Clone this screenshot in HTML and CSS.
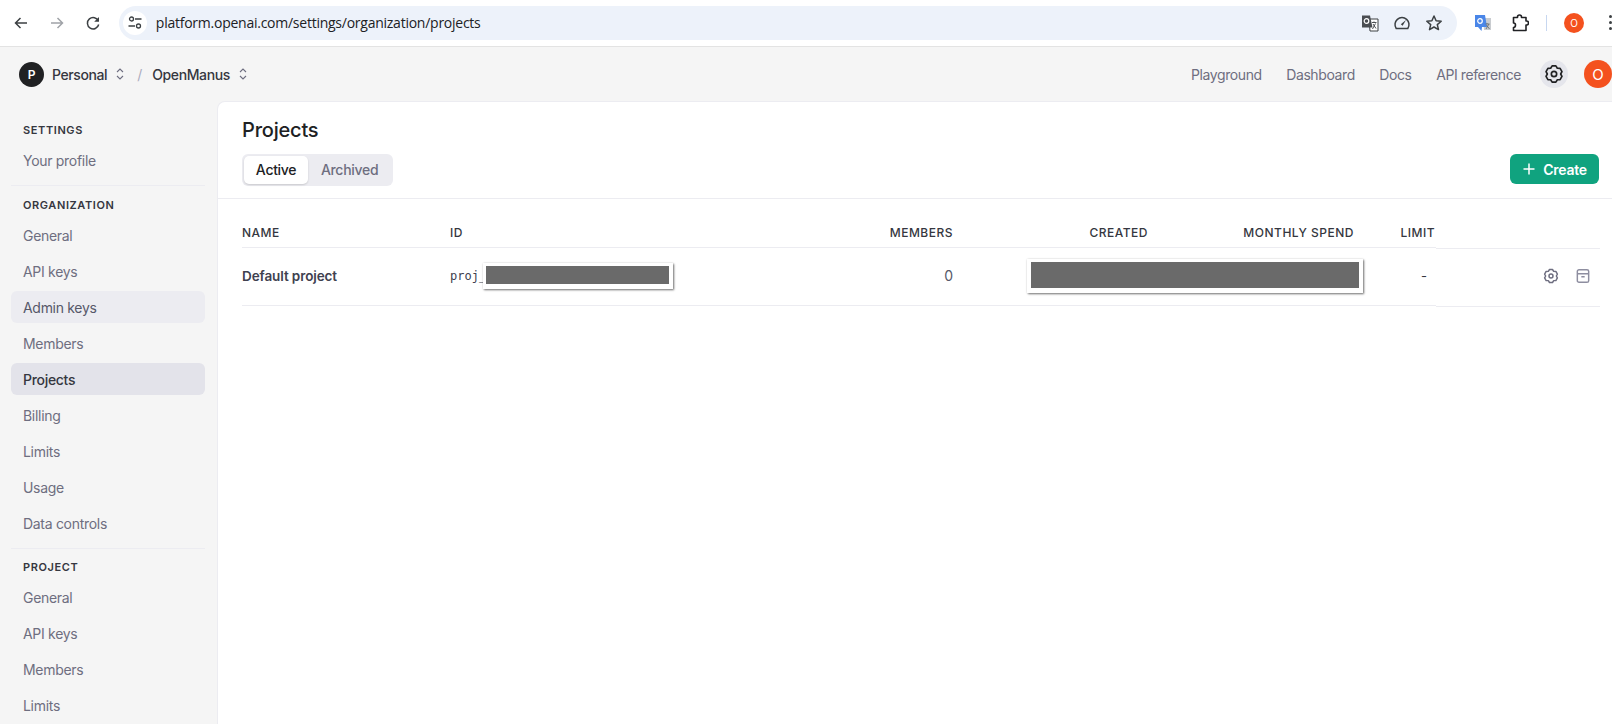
FILE: index.html
```html
<!DOCTYPE html>
<html lang="en">
<head>
<meta charset="utf-8">
<title>Projects - OpenAI Platform</title>
<link rel="stylesheet" href="styles.css">
</head>
<body>
<div class="browser-bar">
  <button class="tool"><svg viewBox="0 0 16 16" class="ico16"><path d="M14 8H2.500M7.500 3l-5 5 5 5" fill="none" stroke="#3c4043" stroke-width="1.500"/></svg></button>
  <button class="tool"><svg viewBox="0 0 16 16" class="ico16"><path d="M2 8h11.500M8.500 3l5 5-5 5" fill="none" stroke="#a0a3a8" stroke-width="1.500"/></svg></button>
  <button class="tool"><svg viewBox="0 0 16 16" class="ico16"><path d="M13.400 6A5.700 5.700 0 1 0 13.700 9.500" fill="none" stroke="#3c4043" stroke-width="1.500"/><path d="M14 2v4.800H9.200z" fill="#3c4043"/></svg></button>
  <div class="omnibox">
    <span class="site-btn"><svg viewBox="0 0 16 16" class="ico16"><g fill="none" stroke="#3c4043" stroke-width="1.300"><circle cx="4.500" cy="4" r="2"/><path d="M8 4h6.500M1.500 11H8"/><circle cx="11.500" cy="11" r="2"/></g></svg></span>
    <span class="url">platform.openai.com/settings/organization/projects</span>
    <span class="omni-icons">
      <svg viewBox="0 0 18 18" class="ico18"><path d="M8 5h9v12H9z" fill="#fff" stroke="#3c4043" stroke-width="1"/><path d="M1 1.500h8l2.500 12H1z" fill="#4a4d51"/><circle cx="5.500" cy="7" r="2.300" fill="none" stroke="#fff" stroke-width="1.200"/><path d="M11 8.500h4.500M13 7.500v1M11.500 15l3-5.500M12 10l3 4.500" stroke="#3c4043" fill="none" stroke-width=".9"/></svg>
      <svg viewBox="0 0 18 18" class="ico18"><path d="M3.200 14.500a7 7 0 1 1 11.600 0z" fill="none" stroke="#3c4043" stroke-width="1.500"/><path d="M7.800 10.300l5.200-4.300-3.400 5.800z" fill="#3c4043"/></svg>
      <svg viewBox="0 0 18 18" class="ico18"><path d="M9 2l2.100 4.700 5.100.5-3.900 3.400 1.200 5L9 13l-4.500 2.600 1.200-5-3.900-3.400 5.100-.5z" fill="none" stroke="#3c4043" stroke-width="1.500" stroke-linejoin="round"/></svg>
    </span>
  </div>
  <div class="ext-icons">
    <svg viewBox="0 0 18 18" class="ico18"><path d="M9 4h8v12H10z" fill="#c9ccd0"/><path d="M1 1h10l2 12H8l-.5 4L4 13H1z" fill="#4a86e8"/><circle cx="6" cy="7" r="2.300" fill="none" stroke="#fff" stroke-width="1.200"/><path d="M11.500 10h4M13 9v1M12 15l3-5M12.500 11l3 4" stroke="#6b6f74" stroke-width=".9" fill="none"/></svg>
    <svg viewBox="0 0 18 18" class="ico18 puzzle"><path d="M6.500 3.500V3a2 2 0 0 1 4 0v.5h4.500V7h.5a2 2 0 0 1 0 4H15v5.500H2.500V13.500c1.500 0 2-1 2-2.500s-.5-2-2-2V3.500z" fill="none" stroke="#202124" stroke-width="1.600" stroke-linejoin="round"/></svg>
    <span class="ext-divider"></span>
    <span class="chrome-avatar">O</span>
    <span class="kebab"><i></i><i></i><i></i></span>
  </div>
</div>

<header class="top-nav">
  <div class="crumbs">
    <span class="org-avatar">P</span>
    <span class="crumb">Personal</span>
    <svg viewBox="0 0 10 14" class="updown"><path d="M2 5l3-3 3 3M2 9l3 3 3-3" fill="none" stroke="#6e6e80" stroke-width="1.100"/></svg>
    <span class="slash">/</span>
    <span class="crumb">OpenManus</span>
    <svg viewBox="0 0 10 14" class="updown"><path d="M2 5l3-3 3 3M2 9l3 3 3-3" fill="none" stroke="#6e6e80" stroke-width="1.100"/></svg>
  </div>
  <nav class="top-links">
    <a>Playground</a>
    <a>Dashboard</a>
    <a>Docs</a>
    <a>API reference</a>
  </nav>
  <span class="gear-btn"><svg viewBox="0 0 24 24" class="ico20"><path d="M14.250 2.260L16 5.070l3.310.11 2.250 3.900L20 12l1.560 2.920-2.250 3.900-3.310.11-1.750 2.810h-4.500L8 18.930l-3.310-.11-2.250-3.900L4 12 2.440 9.080l2.250-3.900L8 5.070l1.750-2.810z" fill="none" stroke="#202123" stroke-width="2" stroke-linejoin="round"/><circle cx="12" cy="12" r="3.200" fill="none" stroke="#202123" stroke-width="2"/></svg></span>
  <span class="user-avatar">O</span>
</header>

<div class="layout">
  <aside class="sidebar">
    <h4 class="side-head first">SETTINGS</h4>
    <a class="side-item">Your profile</a>
    <hr class="side-rule">
    <h4 class="side-head">ORGANIZATION</h4>
    <a class="side-item">General</a>
    <a class="side-item">API keys</a>
    <a class="side-item hover">Admin keys</a>
    <a class="side-item">Members</a>
    <a class="side-item active">Projects</a>
    <a class="side-item">Billing</a>
    <a class="side-item">Limits</a>
    <a class="side-item">Usage</a>
    <a class="side-item">Data controls</a>
    <hr class="side-rule tight">
    <h4 class="side-head">PROJECT</h4>
    <a class="side-item">General</a>
    <a class="side-item">API keys</a>
    <a class="side-item">Members</a>
    <a class="side-item">Limits</a>
  </aside>

  <main class="panel">
    <div class="panel-head">
      <h1 class="title">Projects</h1>
      <div class="head-row">
        <div class="tabs">
          <span class="tab on">Active</span>
          <span class="tab">Archived</span>
        </div>
        <button class="create"><svg viewBox="0 0 14 14" class="plus"><path d="M7 1.500v11M1.500 7h11" stroke="#fff" stroke-width="1.500" fill="none"/></svg>Create</button>
      </div>
    </div>

    <div class="table">
      <div class="tbl-main">
        <div class="tr th">
          <span>NAME</span>
          <span>ID</span>
          <span class="r">MEMBERS</span>
          <span class="r">CREATED</span>
          <span class="r">MONTHLY SPEND</span>
          <span class="r">LIMIT</span>
        </div>
        <div class="tr td">
          <span class="pname">Default project</span>
          <span class="pid">proj_<span class="mask mask-id"><i></i></span></span>
          <span class="r num">0</span>
          <span class="r created-cell"><span class="mask mask-date"><i></i></span></span>
          <span class="r"></span>
          <span class="r dash">-</span>
        </div>
      </div>
      <div class="tbl-actions">
        <div class="act-head"></div>
        <div class="act-cell">
          <svg viewBox="0 0 24 24" class="act"><path d="M14.250 2.260L16 5.070l3.310.11 2.250 3.900L20 12l1.560 2.920-2.250 3.900-3.310.11-1.750 2.810h-4.500L8 18.930l-3.310-.11-2.250-3.900L4 12 2.440 9.080l2.250-3.900L8 5.070l1.750-2.810z" fill="none" stroke="#6e6e80" stroke-width="2.200" stroke-linejoin="round"/><circle cx="12" cy="12" r="3" fill="none" stroke="#6e6e80" stroke-width="2.200"/></svg>
          <svg viewBox="0 0 24 24" class="act"><path d="M6 2.500h12A2.500 2.500 0 0 1 20.500 5v14a2.500 2.500 0 0 1-2.500 2.500H6A2.500 2.500 0 0 1 3.500 19V5A2.500 2.500 0 0 1 6 2.500zM3.500 8.500h17M9.500 13h5" fill="none" stroke="#8e8ea0" stroke-width="2.200"/></svg>
        </div>
      </div>
    </div>
  </main>
</div>
</body>
</html>
```
FILE: styles.css
```css
* { box-sizing: border-box; }
html, body { margin: 0; padding: 0; height: 724px; width: 1612px; overflow: hidden; }
body { font-family: Inter, "Liberation Sans", sans-serif; background: #f5f5f5; color: #353740; display: flex; flex-direction: column; }
svg { display: block; flex: none; }
.ico16 { width: 16px; height: 16px; }
.ico18 { width: 18px; height: 18px; }
.ico20 { width: 20px; height: 20px; }

.browser-bar { height: 47px; flex: none; background: #fff; border-bottom: 1px solid #e3e3e3; display: flex; align-items: center; padding: 0 0 1px 3px; }
.tool { width: 36px; height: 32px; border: 0; background: none; padding: 0; display: flex; align-items: center; justify-content: center; }
.omnibox { width: 1340px; margin-left: 8px; height: 34px; border-radius: 17px; background: #edf2fa; display: flex; align-items: center; padding: 0 14px 0 4px; }
.site-btn { width: 24px; height: 24px; border-radius: 50%; background: #fff; display: flex; align-items: center; justify-content: center; }
.url { font-family: "Open Sans", "Noto Sans", sans-serif; font-size: 14px; letter-spacing: -.25px; color: #202124; margin-left: 9px; flex: 1; white-space: nowrap; }
.omni-icons { display: flex; gap: 14px; }
.ext-icons { display: flex; align-items: center; margin-left: 17px; flex: none; }
.ext-icons .puzzle { margin-left: 19px; }
.ext-divider { width: 1px; height: 16px; background: #c7d7f0; margin-left: 17px; }
.chrome-avatar { width: 20px; height: 20px; border-radius: 50%; background: #f4511e; color: #fff; font-size: 10px; display: flex; align-items: center; justify-content: center; margin-left: 17px; }
.kebab { display: flex; flex-direction: column; gap: 3px; margin-left: 25px; }
.kebab i { width: 3px; height: 3px; border-radius: 50%; background: #3c4043; display: block; }

.top-nav { height: 54px; flex: none; display: flex; align-items: center; padding-left: 19px; }
.crumbs { display: flex; align-items: center; flex: 1; }
.org-avatar { width: 25px; height: 25px; border-radius: 50%; background: #202123; color: #fff; font-size: 12px; font-weight: 600; display: flex; align-items: center; justify-content: center; margin-right: 8px; }
.crumb { font-size: 14px; font-weight: 500; letter-spacing: -.4px; color: #353740; }
.updown { width: 10px; height: 14px; margin-left: 8px; }
.slash { margin: 0 10px 0 12px; color: #acacbe; font-size: 14px; }
.top-links { display: flex; gap: 24.500px; font-size: 14px; letter-spacing: -.4px; color: #6e6e80; }
.gear-btn { width: 28px; height: 28px; border-radius: 50%; background: #e5e6ec; display: flex; align-items: center; justify-content: center; margin-left: 19px; }
.user-avatar { width: 28px; height: 28px; border-radius: 50%; background: #f4511e; color: #fff; font-size: 15px; display: flex; align-items: center; justify-content: center; margin-left: 16px; }

.layout { flex: 1; display: flex; min-height: 0; }
.sidebar { width: 217px; flex: none; padding: 0 12px 0 11px; overflow: hidden; display: flex; flex-direction: column; }
.side-head { margin: 0; padding-left: 12px; font-size: 11px; font-weight: 600; letter-spacing: .6px; color: #353740; height: 16px; line-height: 16px; flex: none; }
.side-head.first { margin-top: 21px; }
.side-item { display: flex; align-items: center; height: 32px; margin: 2px 0; padding-left: 12px; border-radius: 6px; font-size: 14px; letter-spacing: -.3px; color: #6e6e80; flex: none; }
.side-head + .side-item { margin-top: 6px; }
.side-item.hover { background: #ececf1; color: #565869; }
.side-item.active { background: #e3e3ea; color: #353740; font-weight: 500; }
.side-rule { border: 0; border-top: 1px solid #ececf1; margin: 7px 0 11px; flex: none; width: 100%; }
.side-rule.tight { margin-bottom: 10px; }

.panel { flex: 1; background: #fff; border-top: 1px solid #ececf1; border-left: 1px solid #ececf1; border-top-left-radius: 8px; min-width: 0; }
.panel-head { height: 97px; padding: 15px 13px 0 24px; border-bottom: 1px solid #ececf1; }
.title { margin: 0; font-size: 20px; font-weight: 500; letter-spacing: -.2px; line-height: 26px; color: #202123; }
.head-row { display: flex; justify-content: space-between; margin-top: 11px; }
.tabs { display: flex; width: 151px; height: 32px; padding: 2px; border-radius: 6px; background: #ececf1; font-size: 14px; font-weight: 500; letter-spacing: -.3px; color: #6e6e80; }
.tab { display: flex; align-items: center; justify-content: center; width: 65px; padding-bottom: 1px; }
.tab + .tab { width: 84px; }
.tab.on { background: #fff; border-radius: 5px; color: #202123; box-shadow: 0 1px 2px rgba(0,0,0,.15); }
.create { width: 89px; height: 30px; border: 0; border-radius: 6px; background: #10a37f; color: #fff; font: 600 14px Inter, sans-serif; letter-spacing: -.3px; display: flex; align-items: center; justify-content: center; gap: 7px; padding: 0; }
.plus { width: 14px; height: 14px; }

.table { display: flex; padding: 0 12px 0 24px; }
.tbl-main { width: 1194px; flex: none; }
.tr { display: grid; grid-template-columns: 208px 1fr 130px 195px 206px 81px; padding-right: 1px; align-items: center; border-bottom: 1px solid #ececf1; }
.r { text-align: right; }
.th { height: 49px; padding-top: 19px; font-size: 12px; font-weight: 500; letter-spacing: .5px; color: #353740; }
.td { height: 58px; padding-bottom: 2px; font-size: 14px; color: #353740; }
.pname { font-size: 13.500px; font-weight: 600; letter-spacing: -.1px; color: #40414f; }
.pid { font-family: "DejaVu Sans Mono", "Liberation Mono", monospace; font-size: 12px; color: #40414f; position: relative; }
.num { color: #565869; }
.mask { position: absolute; display: flex; background: #fff; box-shadow: 1px 1px 2px rgba(0,0,0,.55), 0 0 2px rgba(0,0,0,.1); }
.mask i { flex: 1; background: #6a6a6a; display: block; }
.mask-id { left: 33px; top: -6px; width: 190px; height: 26px; padding: 3px 4px 5px 3px; }
.created-cell { position: relative; height: 18px; }
.mask-date { right: -215px; top: -8px; width: 336px; height: 34px; padding: 3px 4px 5px 4px; }
.dash { font-size: 13px; padding-right: 8px; }
.tbl-actions { flex: 1; margin-top: 1px; }
.act-head { height: 49px; border-bottom: 1px solid #ececf1; }
.act-cell { height: 58px; padding-bottom: 3px; border-bottom: 1px solid #ececf1; display: flex; align-items: center; justify-content: flex-end; gap: 16px; padding-right: 9px; }
.act { width: 16px; height: 16px; }
```
